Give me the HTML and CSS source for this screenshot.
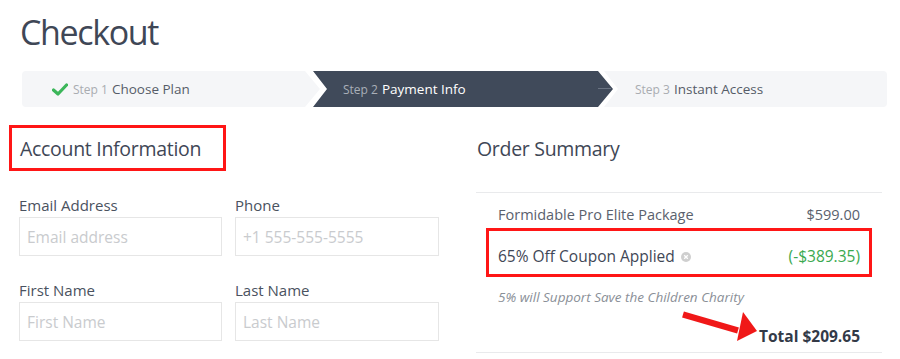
FILE: index.html
```html
<!DOCTYPE html>
<html lang="en">
<head>
<meta charset="utf-8">
<title>Checkout</title>
<link rel="stylesheet" href="styles.css">
</head>
<body>
<div class="page">
  <h1 class="title">Checkout</h1>

  <div class="steps">
    <div class="step step-first">
      <svg class="check" width="16" height="13" viewBox="0 0 16 13"><path d="M1.5 7 L6 11 L14.5 2" fill="none" stroke="#3cb65a" stroke-width="3.2" stroke-linecap="round" stroke-linejoin="round"/></svg>
      <span class="step-num">Step 1</span><span class="step-name">Choose Plan</span>
    </div>
    <div class="step step-mid step-active">
      <span class="step-num">Step 2</span><span class="step-name">Payment Info</span>
      <span class="tail-line"></span>
    </div>
    <div class="step step-last">
      <span class="step-num">Step 3</span><span class="step-name">Instant Access</span>
    </div>
  </div>

  <div class="columns">
    <section class="col-left">
      <h2 class="section-title boxed">Account Information</h2>
      <div class="form-grid">
        <label class="field">
          <span class="field-label">Email Address</span>
          <input class="field-input" type="text" placeholder="Email address">
        </label>
        <label class="field">
          <span class="field-label">Phone</span>
          <input class="field-input" type="text" placeholder="+1 555-555-5555">
        </label>
        <label class="field">
          <span class="field-label">First Name</span>
          <input class="field-input" type="text" placeholder="First Name">
        </label>
        <label class="field">
          <span class="field-label">Last Name</span>
          <input class="field-input" type="text" placeholder="Last Name">
        </label>
      </div>
    </section>

    <section class="col-right">
      <h2 class="section-title plain">Order Summary</h2>
      <div class="summary">
        <div class="row item-row">
          <span>Formidable Pro Elite Package</span>
          <span>$599.00</span>
        </div>
        <div class="row coupon-row">
          <span class="coupon-name">65% Off Coupon Applied <span class="clear-icon"><svg width="10" height="10" viewBox="0 0 10 10"><circle cx="5" cy="5" r="5" fill="#cfcfcf"/><path d="M3.2 3.2 L6.8 6.8 M6.8 3.2 L3.2 6.8" stroke="#fff" stroke-width="1.3"/></svg></span></span>
          <span class="discount">(-$389.35)</span>
        </div>
        <div class="charity">5% will Support Save the Children Charity</div>
        <div class="total">Total $209.65</div>
        <svg class="arrow" width="80" height="40" viewBox="0 0 80 40"><path d="M3 3.5 L58 19.5" stroke="#f01818" stroke-width="6.5" fill="none"/><polygon points="63,1 77,20 57,30" fill="#f01818"/></svg>
      </div>
    </section>
  </div>
</div>
</body>
</html>
```

FILE: styles.css
```css
* { box-sizing: border-box; }
html, body { margin: 0; padding: 0; background: #fff; }
body {
  font-family: "Open Sans", "Noto Sans", "Liberation Sans", sans-serif;
  color: #3f4756;
}
.page {
  width: 900px;
  height: 359px;
  overflow: hidden;
  padding: 0 0 0 20px;
}
.title {
  margin: 0;
  padding-top: 9px;
  height: 71px;
  font-size: 34px;
  font-weight: 400;
  line-height: 46px;
  color: #3f4756;
  letter-spacing: -1.35px;
}
.steps {
  display: flex;
  margin-left: 2px;
  width: 865px;
  height: 36px;
}
.step {
  position: relative;
  display: flex;
  align-items: center;
  height: 36px;
  background: #f5f6f8;
  white-space: nowrap;
}
.step-first {
  width: 298px;
  padding-left: 30px;
  border-radius: 4px 0 0 4px;
  clip-path: polygon(0 0, calc(100% - 15px) 0, 100% 50%, calc(100% - 15px) 100%, 0 100%);
}
.step-mid {
  width: 300px;
  margin-left: -7px;
  padding-left: 30px;
  clip-path: polygon(0 0, calc(100% - 15px) 0, 100% 50%, calc(100% - 15px) 100%, 0 100%, 14px 50%);
}
.step-last {
  flex: 1;
  margin-left: -9px;
  padding-left: 31px;
  border-radius: 0 4px 4px 0;
  clip-path: polygon(0 0, 100% 0, 100% 100%, 0 100%, 14px 50%);
}
.step-active { background: #404a5a; }
.check { margin-right: 5px; margin-top: 1px; }
.step-num {
  font-size: 12px;
  color: #a9acb1;
  margin-right: 4px;
  padding-top: 1px;
}
.step-name {
  font-size: 13.5px;
  color: #555c68;
}
.step-active .step-num { color: #a9afb8; }
.step-active .step-name { color: #ffffff; }
.tail-line {
  position: absolute;
  right: 2px;
  top: 17px;
  width: 13px;
  height: 1px;
  background: #6a7382;
}

.columns {
  display: grid;
  grid-template-columns: 420px 406px;
  column-gap: 36px;
  margin-top: 18px;
}
.section-title {
  margin: 0;
  font-size: 19.5px;
  font-weight: 400;
  letter-spacing: -0.3px;
  line-height: 28px;
  color: #3f4756;
  display: inline-block;
  border: 3px solid #ff1616;
  padding: 7px 22px 8px 8px;
  height: 46px;
}
.boxed { margin-left: -11px; }
.plain {
  border-color: transparent;
  padding-left: 0;
  margin-left: -2px;
}
.form-grid {
  display: grid;
  grid-template-columns: 203px 204px;
  column-gap: 13px;
  row-gap: 24px;
  margin-top: 24px;
  margin-left: -1px;
}
.field { display: flex; flex-direction: column; }
.field-label {
  font-size: 15px;
  line-height: 20px;
  color: #4a5260;
  margin-bottom: 2px;
}
.field-input {
  height: 39px;
  width: 100%;
  border: 1px solid #e6e6e6;
  border-radius: 0;
  padding: 0 7px;
  font-family: inherit;
  font-size: 15.5px;
  color: #444;
  background: #fff;
  outline: none;
}
.field-input::placeholder { color: #c9cbce; }

.col-right { display: flex; flex-direction: column; }
.summary {
  position: relative;
  margin-top: 21px;
  border-top: 1px solid #e9eaec;
  border-bottom: 1px solid #e9eaec;
  padding-bottom: 4px;
}
.row {
  display: flex;
  justify-content: space-between;
  align-items: center;
}
.item-row {
  margin-top: 7px;
  height: 28px;
  padding: 0 22px;
  font-size: 14.5px;
  color: #5a616d;
}
.coupon-row {
  margin: 0 10px;
  height: 49px;
  border: 3px solid #ff1616;
  padding: 6px 9px 0 9px;
  font-size: 15.5px;
  color: #3f4756;
}
.coupon-name { display: flex; align-items: center; }
.clear-icon { display: inline-flex; margin-left: 6px; margin-top: 3px; }
.discount { color: #3aa94f; }
.charity {
  margin-top: 10px;
  padding-left: 22px;
  font-size: 13.5px;
  line-height: 20px;
  font-style: italic;
  color: #8a8f97;
}
.total {
  margin-top: 17px;
  padding-right: 22px;
  text-align: right;
  font-size: 15.5px;
  line-height: 24px;
  font-weight: 700;
  color: #333a47;
}
.arrow {
  position: absolute;
  left: 204px;
  top: 118px;
}
```
